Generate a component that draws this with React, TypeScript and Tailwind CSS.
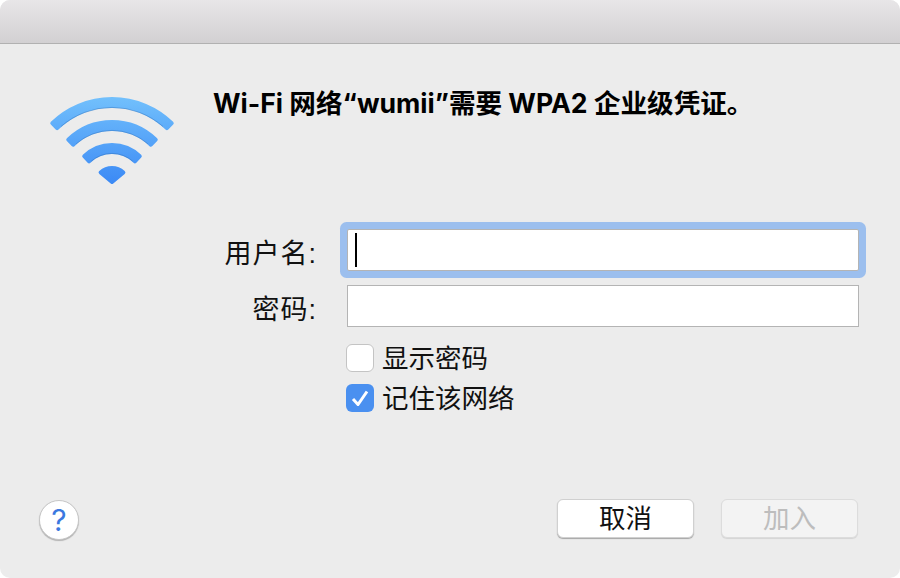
const FONT = "font-['Liberation_Sans','Noto_Sans_CJK_SC',sans-serif]";

const CX = 112;
const CY = 185;

function pt(r: number, a: number) {
  const rad = (a * Math.PI) / 180;
  return `${(CX + r * Math.sin(rad)).toFixed(2)} ${(CY - r * Math.cos(rad)).toFixed(2)}`;
}

// wedge band around the signal origin, 45deg each side
function band(outer: number, inner: number) {
  const pad = 2;
  const ro = outer - pad;
  const ri = inner + pad;
  const a = 44;
  if (inner === 0) {
    return `M${pt(ro, -42)} A${ro} ${ro} 0 0 1 ${pt(ro, 42)} L${CX} ${CY - 3} Z`;
  }
  return `M${pt(ro, -a)} A${ro} ${ro} 0 0 1 ${pt(ro, a)} L${pt(ri, a)} A${ri} ${ri} 0 0 0 ${pt(ri, -a)} Z`;
}

function WifiIcon() {
  const bands: [number, number][] = [
    [88, 77],
    [65, 54],
    [42, 31],
    [19, 0],
  ];
  return (
    <svg width="140" height="110" viewBox="42 90 140 110" className="block">
      <defs>
        <linearGradient id="wifi" gradientUnits="userSpaceOnUse" x1="0" y1="97" x2="0" y2="186">
          <stop offset="0" stopColor="#72c0fc" />
          <stop offset="1" stopColor="#3a88f5" />
        </linearGradient>
      </defs>
      {bands.map(([o, i]) => (
        <g key={o}>
          <path d={band(o, i)} fill="url(#wifi)" stroke="url(#wifi)" strokeWidth="4" strokeLinejoin="round" />
          {i > 0 && (
            <path
              d={`M${pt(i + 0.6, -41)} A${i + 0.6} ${i + 0.6} 0 0 1 ${pt(i + 0.6, 41)}`}
              fill="none"
              stroke="#2f6fb5"
              strokeOpacity="0.4"
              strokeWidth="1"
            />
          )}
        </g>
      ))}
    </svg>
  );
}

function Field({ label, focused }: { label: string; focused?: boolean }) {
  return (
    <div className="flex items-center h-[42px]">
      <label className="w-[134px] shrink-0 pt-[8px] text-right text-[27px] leading-none tracking-[1px] text-[#111] pr-[30px]">{label}</label>
      <div
        className={`w-[512px] h-[42px] bg-white border border-[#b4b4b4] flex items-center pl-[7px] ${
          focused ? 'shadow-[0_0_0_7px_#9cbfee] rounded-[2px]' : ''
        }`}
      >
        {focused && <div className="w-[2px] h-[34px] bg-black" />}
      </div>
    </div>
  );
}

export default function App() {
  return (
    <div className={`w-[900px] h-[578px] bg-white ${FONT}`}>
      <div className="w-full h-full rounded-[10px] overflow-hidden bg-[#ececec] flex flex-col">
        <div className="h-[44px] shrink-0 bg-gradient-to-b from-[#e8e6e8] to-[#d2d0d2] border-b border-[#b1b1b1]" />

        <div className="flex-1 flex flex-col pl-[39px] pr-[42px] pb-[38px]">
          <div className="flex-1 flex">
            <div className="w-[174px] shrink-0 pt-[46px] pl-[3px]">
              <WifiIcon />
            </div>
            <div className="flex-1 flex flex-col">
              <h1 className="pt-[44px] font-['Inter','Noto_Sans_CJK_SC',sans-serif] text-[26.6px] leading-[30px] font-bold text-black whitespace-nowrap">
                Wi-Fi 网络“wumii”需要 WPA2 企业级凭证。
              </h1>
              <div className="mt-[111px] flex flex-col gap-[14px]">
                <Field label="用户名:" focused />
                <Field label="密码:" />
              </div>
              <div className="mt-[17px] ml-[133px] flex flex-col gap-[12px]">
                <div className="flex items-center gap-[9px] h-[28px] text-[26.5px] text-[#111]">
                  <span className="w-[28px] h-[28px] rounded-[6px] bg-white border border-[#c4c4c4]" />
                  <span className="-ml-[1px] pt-[4px]">显示密码</span>
                </div>
                <div className="flex items-center gap-[9px] h-[28px] text-[26.5px] text-[#111]">
                  <span className="w-[28px] h-[28px] rounded-[6px] bg-[#4a90f0] flex items-center justify-center">
                    <svg width="18" height="16" viewBox="0 0 18 16" fill="none">
                      <path d="M2 9 L7 14.5 L16 1.5" stroke="#fff" strokeWidth="3" />
                    </svg>
                  </span>
                  <span className="-ml-[1px] pt-[4px]">记住该网络</span>
                </div>
              </div>
            </div>
          </div>

          <div className="flex items-start justify-between h-[41px]">
            <button className="mt-[1px] w-[40px] h-[40px] rounded-full bg-white border border-[#c6c6c6] shadow-[0_1px_1px_rgba(0,0,0,0.25)] font-['Inter',sans-serif] font-normal text-[#3b78e0] text-[30px] leading-none flex items-center justify-center">
              ?
            </button>
            <div className="flex gap-[27px]">
              <button className="w-[137px] h-[39px] rounded-[6px] bg-white border border-[#d0d0d0] shadow-[0_1px_1px_rgba(0,0,0,0.3)] pt-[2px] text-[26.5px] leading-none text-[#111]">
                取消
              </button>
              <button className="w-[137px] h-[39px] rounded-[6px] bg-[#f3f3f3] border border-[#dcdcdc] shadow-[0_1px_1px_rgba(0,0,0,0.1)] pt-[2px] text-[26.5px] leading-none text-[#bdbdbd]">
                加入
              </button>
            </div>
          </div>
        </div>
      </div>
    </div>
  );
}
